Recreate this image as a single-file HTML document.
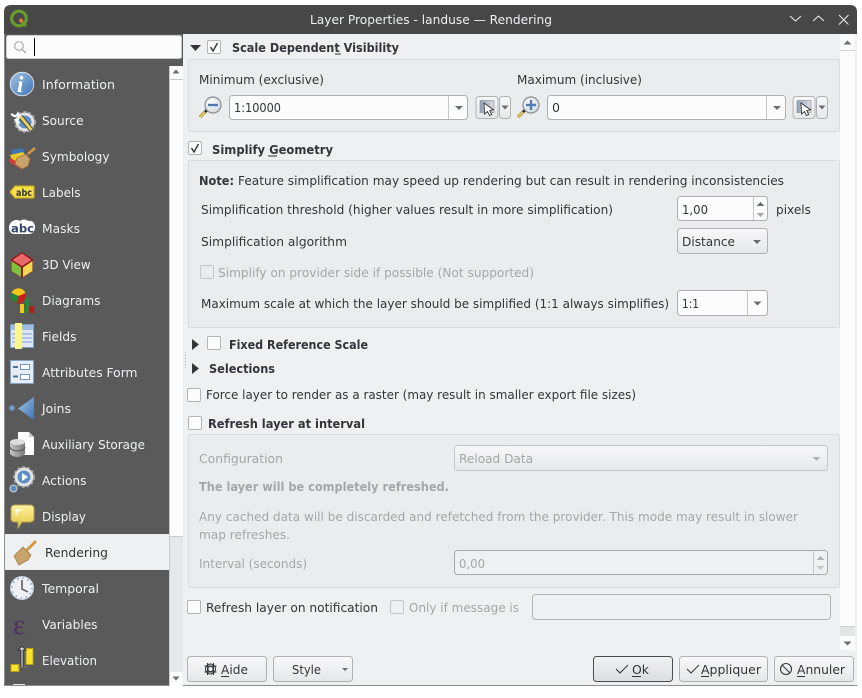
<!DOCTYPE html>
<html><head><meta charset="utf-8"><title>Layer Properties</title>
<style>
html,body{margin:0;padding:0;background:#fff;width:862px;height:698px;overflow:hidden}
svg{display:block}
text{font-family:"DejaVu Sans",sans-serif;font-size:12.8px;fill:#31363b}
.s{fill:#eff0f1}
.b{font-weight:bold;font-size:12.6px;fill:#31363b}
.d{fill:#a4a6a8}
.db{font-weight:bold;font-size:12.6px;fill:#a4a6a8}
.box{fill:#ebecee;stroke:#d8dadc}
.in{fill:#fcfcfc;stroke:#aeb0b2}
.cb{fill:#fcfcfc;stroke:#b3b5b7}
.ck{fill:none;stroke:#31363b;stroke-width:1.4}
.btn{fill:url(#bg);stroke:#b0b2b4}
.ar{fill:#6a6d70}
.u{stroke:#31363b;stroke-width:1}
</style></head><body>
<svg width="862" height="698" viewBox="0 0 862 698" xmlns="http://www.w3.org/2000/svg">
<defs>
<linearGradient id="bg" x1="0" y1="0" x2="0" y2="1"><stop offset="0" stop-color="#f8f8f9"/><stop offset="1" stop-color="#e6e7e9"/></linearGradient>
<linearGradient id="ok" x1="0" y1="0" x2="0" y2="1"><stop offset="0" stop-color="#f2f2f3"/><stop offset="1" stop-color="#dcdddf"/></linearGradient>
<linearGradient id="blue" x1="0" y1="0" x2="1" y2="1"><stop offset="0" stop-color="#a3c4e6"/><stop offset="1" stop-color="#3e74b2"/></linearGradient>
<linearGradient id="yel" x1="0" y1="0" x2="0" y2="1"><stop offset="0" stop-color="#fdf2a0"/><stop offset="1" stop-color="#e2c63c"/></linearGradient>
<linearGradient id="disk" x1="0" y1="0" x2="1" y2="0"><stop offset="0" stop-color="#c8c8c8"/><stop offset="1" stop-color="#777"/></linearGradient>
<linearGradient id="map" x1="0" y1="0" x2="1" y2="0"><stop offset="0" stop-color="#8fa3ba"/><stop offset="1" stop-color="#d9dde2"/></linearGradient>
<radialGradient id="lens" cx=".4" cy=".35" r=".8"><stop offset="0" stop-color="#fff"/><stop offset="1" stop-color="#c9d0d8"/></radialGradient>
</defs>

<!-- window -->
<path d="M4 686V12q0-7 7-7H850q7 0 7 7V686z" fill="#eff0f1"/>
<path d="M4 34V12q0-7 7-7H850q7 0 7 7V34z" fill="#474747"/>
<rect x="4" y="685" width="853" height="1" fill="#8a8c8e"/>
<!-- logo -->
<circle cx="19" cy="18.500" r="7.300" fill="none" stroke="#6a9c2c" stroke-width="3.200"/>
<path d="M20 20l6 6" stroke="#6a9c2c" stroke-width="3"/>
<circle cx="21" cy="20.500" r="2" fill="#e8742a"/>
<text x="310" y="24" class="s" textLength="242" lengthAdjust="spacingAndGlyphs">Layer Properties - landuse — Rendering</text>
<path d="M790 16l5.500 5 5.500-5" fill="none" stroke="#e8e8e8" stroke-width="1.100"/>
<path d="M813 21l5.500-5 5.500 5" fill="none" stroke="#e8e8e8" stroke-width="1.100"/>
<path d="M839 15l9.500 9.500M848.500 15l-9.500 9.500" fill="none" stroke="#e8e8e8" stroke-width="1.100"/>

<!-- sidebar -->
<rect x="4" y="34" width="179" height="32" fill="#5a5a5a"/>
<rect x="5" y="66" width="165" height="619" fill="#5a5a5a"/>
<rect x="4" y="34" width="1" height="652" fill="#8a8c8e"/>
<rect x="6.500" y="35.500" width="175" height="23" rx="2" fill="#fcfcfc" stroke="#c9cacb"/>
<circle cx="19" cy="46" r="4.300" fill="none" stroke="#a9abad" stroke-width="1.200"/>
<path d="M22 49.500l4 3.500" stroke="#a9abad" stroke-width="1.400"/>
<rect x="34" y="38" width="1" height="18" fill="#000"/>
<rect x="170" y="66" width="13" height="620" fill="#fcfcfc"/>
<rect x="170" y="536" width="13" height="149" fill="#e6e7e9"/>
<path d="M170 79.500h13" stroke="#c9cacb"/>
<path d="M170 536.500h13M169.500 66v620" stroke="#c9cacb"/>
<path d="M172.500 73.500h7l-3.500-4z" class="ar"/>
<rect x="170" y="672" width="13" height="13" fill="#fcfcfc"/>
<path d="M172.500 676.500h7l-3.500 4z" class="ar"/>
<rect x="5" y="534" width="164" height="36" fill="#eff0f1"/>

<g>
<text x="42" y="89" class="s" textLength="73" lengthAdjust="spacingAndGlyphs">Information</text>
<text x="42" y="125" class="s" textLength="41.500" lengthAdjust="spacingAndGlyphs">Source</text>
<text x="42" y="161" class="s" textLength="67.500" lengthAdjust="spacingAndGlyphs">Symbology</text>
<text x="42" y="197" class="s" textLength="38.500" lengthAdjust="spacingAndGlyphs">Labels</text>
<text x="42" y="233" class="s" textLength="38" lengthAdjust="spacingAndGlyphs">Masks</text>
<text x="42" y="269" class="s" textLength="48.500" lengthAdjust="spacingAndGlyphs">3D View</text>
<text x="42" y="305" class="s" textLength="58.500" lengthAdjust="spacingAndGlyphs">Diagrams</text>
<text x="42" y="341" class="s" textLength="34.500" lengthAdjust="spacingAndGlyphs">Fields</text>
<text x="42" y="377" class="s" textLength="95.500" lengthAdjust="spacingAndGlyphs">Attributes Form</text>
<text x="42" y="413" class="s" textLength="29" lengthAdjust="spacingAndGlyphs">Joins</text>
<text x="42" y="449" class="s" textLength="103" lengthAdjust="spacingAndGlyphs">Auxiliary Storage</text>
<text x="42" y="485" class="s" textLength="44.500" lengthAdjust="spacingAndGlyphs">Actions</text>
<text x="42" y="521" class="s" textLength="44" lengthAdjust="spacingAndGlyphs">Display</text>
<text x="45" y="557" textLength="63" lengthAdjust="spacingAndGlyphs">Rendering</text>
<text x="42" y="593" class="s" textLength="57" lengthAdjust="spacingAndGlyphs">Temporal</text>
<text x="42" y="629" class="s" textLength="55.500" lengthAdjust="spacingAndGlyphs">Variables</text>
<text x="42" y="665" class="s" textLength="55" lengthAdjust="spacingAndGlyphs">Elevation</text>
</g>

<!-- sidebar icons -->
<circle cx="22" cy="84" r="11.800" fill="url(#blue)" stroke="#e4ecf5" stroke-width=".8"/>
<text x="17" y="92" style="font-family:'Liberation Serif',serif;font-size:23px;font-weight:bold;font-style:italic;fill:#fff">i</text>

<!-- source -->
<circle cx="25" cy="122" r="8" fill="#5f8fc9" stroke="#e2e3e4" stroke-width="3"/>
<circle cx="25" cy="122" r="10" fill="none" stroke="#a5a7a9" stroke-width="1.800" stroke-dasharray="3 2"/>
<path d="M20.500 116.500l11 13.500" stroke="#2e2e2e" stroke-width="4.600"/>
<path d="M20.500 116.500l11 13.500" stroke="#ecd25a" stroke-width="3"/>
<path d="M11.500 113.500c1.500 3 5 3.500 6.500 0 2 3 .5 6-2 6.500l3.500 3.500" fill="none" stroke="#fff" stroke-width="2.200"/>

<!-- symbology -->
<path d="M11 150l12-2 3 9-12 3z" fill="#3d74b4"/>
<path d="M10 155l13-3 3 5-13 5z" fill="#e6c82c"/>
<path d="M10 158l12 6-1 5-12-7z" fill="#d63a3a"/>
<path d="M28 154l7-6" stroke="#d8963c" stroke-width="2.500"/>
<path d="M17 158l9-4 4 5-2 7-6 3-7-5z" fill="#c9a36b" stroke="#9a7238" stroke-width=".7"/>

<!-- labels -->
<path d="M15 186h19v12H15l-5-6z" fill="#f5e04a" stroke="#c8a81e" stroke-width="1.200"/>
<text x="16" y="196" style="font-size:10px;font-weight:bold;fill:#333" textLength="16" lengthAdjust="spacingAndGlyphs">abc</text>

<!-- masks -->
<path d="M13 221c3-2 6-1 7 0 2-2 6-2 8 0 3-1 7 1 7 6s-3 7-6 7H14c-3 0-5-3-5-6 0-4 2-6 4-7z" fill="#fff"/>
<text x="11" y="232.500" style="font-size:11.500px;font-weight:bold;fill:#34466a" textLength="23" lengthAdjust="spacingAndGlyphs">abc</text>

<!-- 3D -->
<path d="M22 252l11 7v12l-11 7-11-7v-12z" fill="#8c1c1c"/>
<path d="M22 253.500l9.500 6.500-9.500 6-9.500-6z" fill="#e86a6a"/>
<path d="M11.500 261l9.500 6.500v9.500l-9.500-6z" fill="#7cc43a"/>
<path d="M32.500 261l-9.500 6.500v9.500l9.500-6z" fill="#f2d84e"/>

<!-- diagrams -->
<circle cx="18.500" cy="296" r="7.500" fill="#c81e1e"/>
<path d="M18.500 296l-7-3a7.500 7.500 0 0 1 14 0z" fill="#f0c81c"/>
<path d="M18.500 296l-7-3a7.500 7.500 0 0 0 5.500 10z" fill="#1e8a3a"/>
<rect x="20" y="304" width="4" height="9" fill="#f0c81c"/>
<rect x="25" y="298" width="4" height="15" fill="#1e8a3a"/>
<rect x="29" y="306" width="5" height="7" fill="#b01c1c"/>

<!-- fields -->
<rect x="10.500" y="324.500" width="23" height="23" fill="#dfe8f3" stroke="#7ea2cc"/>
<rect x="11" y="325" width="22" height="5" fill="#9fbde0"/>
<path d="M22 334h10M22 338h10M22 342h10M12 334h3M12 338h3M12 342h3" stroke="#7ea2cc"/>
<rect x="15" y="323" width="7" height="26" fill="#fdf68c"/>

<!-- attributes form -->
<rect x="10.500" y="360.500" width="23" height="23" fill="#e8edf4" stroke="#7ea2cc"/>
<path d="M13 367h5M13 376.500h5" stroke="#4e6f96" stroke-width="2"/>
<rect x="20.500" y="364.500" width="9" height="5" fill="#fff" stroke="#6f95c0"/>
<rect x="20.500" y="374.500" width="9" height="5" fill="#fff" stroke="#6f95c0"/>

<!-- joins -->
<circle cx="12" cy="408" r="2.800" fill="#6e9bcd"/>
<path d="M34 397v23l-16-11.500z" fill="url(#blue)"/>

<!-- aux -->
<path d="M18 432h11l5 5v18H18z" fill="#fff"/>
<path d="M29 432v5h5" fill="#ccc"/>
<path d="M10 442v11c0 2 3.500 4 7.500 4s7.500-2 7.500-4v-11z" fill="url(#disk)"/>
<ellipse cx="17.500" cy="442" rx="7.500" ry="3" fill="#ddd"/>
<path d="M10 447c0 2 3.500 4 7.500 4s7.500-2 7.500-4" fill="none" stroke="#555"/>

<!-- actions -->
<circle cx="24" cy="477" r="8" fill="#5f8fc9" stroke="#e2e3e4" stroke-width="3"/>
<circle cx="24" cy="477" r="10" fill="none" stroke="#a5a7a9" stroke-width="1.800" stroke-dasharray="3 2"/>
<path d="M22 473v8l6-4z" fill="#fff"/>
<circle cx="13.500" cy="488.500" r="3.500" fill="#5f8fc9" stroke="#c8d0d8"/>

<!-- display -->
<path d="M15 505h15q4 0 4 4v9q0 4-4 4H22l-4 6v-6h-3q-4 0-4-4v-9q0-4 4-4z" fill="url(#yel)" stroke="#b8a456"/>
<path d="M15 509h8q-6 2-7 7z" fill="#fff" opacity=".8"/>

<!-- rendering -->
<path d="M26 551l10-10" stroke="#d8963c" stroke-width="2.800"/>
<path d="M14 556l9-9 8 8-3 5-9 5z" fill="#c9a36b" stroke="#9a7238" stroke-width=".7"/>

<!-- temporal -->
<circle cx="22" cy="588" r="11.500" fill="#eef1f5" stroke="#c9d2dc"/>
<circle cx="22" cy="588" r="10" fill="none" stroke="#7ea2cc" stroke-width="1.600" stroke-dasharray="1.400 3.840"/>
<path d="M22 580v9l6 3" fill="none" stroke="#555" stroke-width="1.500"/>

<!-- variables -->
<text x="13" y="634" style="font-family:'Liberation Serif',serif;font-size:29px;fill:#4f2d68">ε</text>

<!-- elevation -->
<rect x="26" y="648.500" width="7" height="16" fill="#f7e32a" stroke="#b89f1a"/>
<rect x="11" y="664.500" width="8" height="7" fill="#f7e32a" stroke="#b89f1a"/>
<path d="M21 667v-17h-3l4-3.500 4 3.500h-3v17z" fill="#ddd" stroke="#222" stroke-width=".8"/>
<path d="M18 667h10" stroke="#777"/>
<rect x="13" y="684" width="12" height="1" fill="#e6e6e6"/>

<!-- main group 1 -->
<path d="M190 45h11l-5.500 6z" fill="#31363b"/>
<rect x="207.500" y="40.500" width="13" height="13" rx="1.500" class="cb"/>
<path d="M210.500 47l2.500 4 4.500-8" class="ck"/>
<text x="232" y="52" class="b" textLength="167" lengthAdjust="spacingAndGlyphs">Scale Dependent Visibility</text>
<path d="M335 54h6" class="u"/>
<rect x="188.500" y="59.500" width="651" height="72" rx="2" class="box"/>
<text x="199" y="84" textLength="125" lengthAdjust="spacingAndGlyphs">Minimum (exclusive)</text>
<text x="517" y="84" textLength="125" lengthAdjust="spacingAndGlyphs">Maximum (inclusive)</text>

<rect x="229.500" y="95.500" width="238" height="24" rx="3" class="in"/>
<path d="M448.500 96v23" stroke="#c5c7c9"/>
<path d="M455 106h8l-4 4z" class="ar"/>
<text x="234" y="112" textLength="47" lengthAdjust="spacingAndGlyphs">1:10000</text>
<rect x="547.500" y="95.500" width="238" height="24" rx="3" class="in"/>
<path d="M766.500 96v23" stroke="#c5c7c9"/>
<path d="M773 106h8l-4 4z" class="ar"/>
<text x="552" y="112" textLength="8" lengthAdjust="spacingAndGlyphs">0</text>

<!-- zoom icons -->
<path d="M200 117l8-8" stroke="#2a2a2a" stroke-width="3"/>
<path d="M200 117l5-5" stroke="#e8c84a" stroke-width="2.400"/>
<circle cx="213" cy="105" r="8" fill="url(#lens)" stroke="#8a8f96" stroke-width="1.200"/>
<path d="M208 105h10" stroke="#4f7cb0" stroke-width="2.400"/>
<path d="M518 117l8-8" stroke="#2a2a2a" stroke-width="3"/>
<path d="M518 117l5-5" stroke="#e8c84a" stroke-width="2.400"/>
<circle cx="531" cy="105" r="8" fill="url(#lens)" stroke="#8a8f96" stroke-width="1.200"/>
<path d="M526 105h10M531 100v10" stroke="#4f7cb0" stroke-width="2.400"/>

<!-- canvas scale buttons -->
<g>
<rect x="476" y="96.500" width="22" height="22" rx="3" class="btn"/>
<rect x="480" y="100.500" width="14" height="12" fill="url(#map)" stroke="#8a8d90" stroke-width=".6"/>
<path d="M484 103l.5 11 3-2.500 2 4 2.200-1-2-4 3.800-.7z" fill="#fff" stroke="#222" stroke-width=".8"/>
<rect x="499.500" y="96.500" width="11" height="22" rx="3" class="btn"/>
<path d="M501.500 105.500h7l-3.500 4z" class="ar"/>
<rect x="793" y="96.500" width="22" height="22" rx="3" class="btn"/>
<rect x="797" y="100.500" width="14" height="12" fill="url(#map)" stroke="#8a8d90" stroke-width=".6"/>
<path d="M801 103l.5 11 3-2.500 2 4 2.200-1-2-4 3.800-.7z" fill="#fff" stroke="#222" stroke-width=".8"/>
<rect x="816.500" y="96.500" width="11" height="22" rx="3" class="btn"/>
<path d="M818.500 105.500h7l-3.500 4z" class="ar"/>
</g>

<!-- simplify -->
<rect x="188.500" y="141.500" width="13" height="13" rx="1.500" class="cb"/>
<path d="M191.500 148l2.500 4 4.500-8" class="ck"/>
<text x="212" y="154" class="b" textLength="121" lengthAdjust="spacingAndGlyphs">Simplify Geometry</text>
<path d="M268 156h9" class="u"/>
<rect x="188.500" y="160.500" width="651" height="167" rx="2" class="box"/>
<text x="199" y="185" class="b" textLength="35" lengthAdjust="spacingAndGlyphs">Note:</text>
<text x="238" y="185" textLength="546" lengthAdjust="spacingAndGlyphs">Feature simplification may speed up rendering but can result in rendering inconsistencies</text>
<text x="201" y="214" textLength="412" lengthAdjust="spacingAndGlyphs">Simplification threshold (higher values result in more simplification)</text>
<rect x="677.500" y="196.500" width="90" height="24" rx="3" class="in"/>
<path d="M753.500 197v23" stroke="#c5c7c9"/>
<path d="M756.500 206h8l-4-4z" class="ar"/>
<path d="M756.500 213h8l-4 4z" fill="#a8aaac"/>
<text x="682" y="214" textLength="26" lengthAdjust="spacingAndGlyphs">1,00</text>
<text x="776" y="214" textLength="35" lengthAdjust="spacingAndGlyphs">pixels</text>
<text x="201" y="246" textLength="146" lengthAdjust="spacingAndGlyphs">Simplification algorithm</text>
<rect x="677.500" y="228.500" width="90" height="25" rx="3" class="btn"/>
<text x="682" y="246" textLength="53" lengthAdjust="spacingAndGlyphs">Distance</text>
<path d="M753 240h8l-4 4z" class="ar"/>
<rect x="200.500" y="265.500" width="13" height="13" rx="1.500" fill="#ebecee" stroke="#c4c6c8"/>
<text x="218" y="277" class="d" textLength="316" lengthAdjust="spacingAndGlyphs">Simplify on provider side if possible (Not supported)</text>
<text x="201" y="308" textLength="468" lengthAdjust="spacingAndGlyphs">Maximum scale at which the layer should be simplified (1:1 always simplifies)</text>
<rect x="677.500" y="290.500" width="90" height="25" rx="3" class="in"/>
<path d="M747.500 291v24" stroke="#c5c7c9"/>
<path d="M753.500 301.500h8l-4 4z" class="ar"/>
<text x="682" y="308" textLength="17" lengthAdjust="spacingAndGlyphs">1:1</text>

<!-- collapsed -->
<path d="M192 339v11l7-5.500z" fill="#31363b"/>
<rect x="207.500" y="336.500" width="13" height="13" rx="1.500" class="cb"/>
<text x="229" y="349" class="b" textLength="139" lengthAdjust="spacingAndGlyphs">Fixed Reference Scale</text>
<path d="M192 363v11l7-5.500z" fill="#31363b"/>
<text x="209" y="373" class="b" textLength="66" lengthAdjust="spacingAndGlyphs">Selections</text>
<path d="M185.500 352v17" stroke="#a8aaac" stroke-dasharray="1 2"/>

<rect x="187.500" y="388.500" width="13" height="13" rx="1.500" class="cb"/>
<text x="206" y="399" textLength="430" lengthAdjust="spacingAndGlyphs">Force layer to render as a raster (may result in smaller export file sizes)</text>
<rect x="188.500" y="416.500" width="13" height="13" rx="1.500" class="cb"/>
<text x="208" y="428" class="b" textLength="157" lengthAdjust="spacingAndGlyphs">Refresh layer at interval</text>

<!-- group 3 -->
<rect x="188.500" y="434.500" width="651" height="153" rx="2" class="box"/>
<text x="199" y="463" class="d" textLength="84" lengthAdjust="spacingAndGlyphs">Configuration</text>
<rect x="454.500" y="445.500" width="373" height="25" rx="3" fill="url(#bg)" stroke="#c4c6c8"/>
<text x="459" y="463" class="d" textLength="74" lengthAdjust="spacingAndGlyphs">Reload Data</text>
<path d="M812.500 457h8l-4 4z" fill="#b0b2b4"/>
<text x="199" y="491" class="db" textLength="250" lengthAdjust="spacingAndGlyphs">The layer will be completely refreshed.</text>
<text x="199" y="521" class="d" textLength="599" lengthAdjust="spacingAndGlyphs">Any cached data will be discarded and refetched from the provider. This mode may result in slower</text>
<text x="199" y="539" class="d" textLength="91" lengthAdjust="spacingAndGlyphs">map refreshes.</text>
<text x="199" y="568" class="d" textLength="108" lengthAdjust="spacingAndGlyphs">Interval (seconds)</text>
<rect x="454.500" y="550.500" width="373" height="24" rx="3" fill="#eff0f1" stroke="#a6a8aa"/>
<path d="M813.500 551v23" stroke="#c5c7c9"/>
<path d="M816.500 560h8l-4-4z" fill="#b0b2b4"/>
<path d="M816.500 566h8l-4 4z" fill="#c4c6c8"/>
<text x="459" y="568" class="d" textLength="26" lengthAdjust="spacingAndGlyphs">0,00</text>

<!-- notification -->
<rect x="187.500" y="600.500" width="13" height="13" rx="1.500" class="cb"/>
<text x="206" y="612" textLength="172" lengthAdjust="spacingAndGlyphs">Refresh layer on notification</text>
<rect x="390.500" y="600.500" width="13" height="13" rx="1.500" fill="#eff0f1" stroke="#c4c6c8"/>
<text x="409" y="612" class="d" textLength="110" lengthAdjust="spacingAndGlyphs">Only if message is</text>
<rect x="532.500" y="594.500" width="298" height="25" rx="3" fill="#eff0f1" stroke="#b0b2b4"/>

<!-- main scrollbar -->
<rect x="840" y="34" width="15" height="616" fill="#fcfcfc"/>
<rect x="840" y="626" width="15" height="10" fill="#e4e5e7"/>
<path d="M840 50.500h15M840 626.500h15" stroke="#cfd1d3"/>
<path d="M843.500 44.500h8l-4-4z" class="ar"/>
<path d="M843.500 641.500h8l-4 4z" class="ar"/>

<!-- buttons -->
<rect x="187.500" y="656.500" width="79" height="25" rx="3" class="btn"/>
<g fill="none" stroke="#31363b"><circle cx="210.500" cy="669" r="5"/><circle cx="210.500" cy="669" r="2.600"/><path d="M207.500 663v12M213.500 663v12M204.500 666h12M204.500 672h12" stroke-width="1"/></g>
<text x="221" y="674" textLength="27" lengthAdjust="spacingAndGlyphs">Aide</text>
<path d="M221 676.500h8" class="u"/>
<rect x="273.500" y="656.500" width="79" height="25" rx="3" class="btn"/>
<text x="292" y="674" textLength="29" lengthAdjust="spacingAndGlyphs">Style</text>
<path d="M342 668h6l-3 3z" class="ar"/>
<rect x="593.500" y="656.500" width="79" height="25" rx="3" fill="url(#ok)" stroke="#4a4d50"/>
<path d="M616 669l4 4 8-8" fill="none" stroke="#31363b" stroke-width="1"/>
<text x="632" y="674" textLength="17" lengthAdjust="spacingAndGlyphs">Ok</text>
<path d="M632 676.500h9" class="u"/>
<rect x="679.500" y="656.500" width="88" height="25" rx="3" class="btn"/>
<path d="M687 669l4 4 8-8" fill="none" stroke="#31363b" stroke-width="1"/>
<text x="701" y="674" textLength="60" lengthAdjust="spacingAndGlyphs">Appliquer</text>
<path d="M701 676.500h8" class="u"/>
<rect x="774.500" y="656.500" width="79" height="25" rx="3" class="btn"/>
<circle cx="786" cy="669" r="5.500" fill="none" stroke="#31363b" stroke-width="1.100"/>
<path d="M782 665l8 8" stroke="#31363b" stroke-width="1.100"/>
<text x="797" y="674" textLength="48" lengthAdjust="spacingAndGlyphs">Annuler</text>
<path d="M797 676.500h8" class="u"/>
</svg>
</body></html>
